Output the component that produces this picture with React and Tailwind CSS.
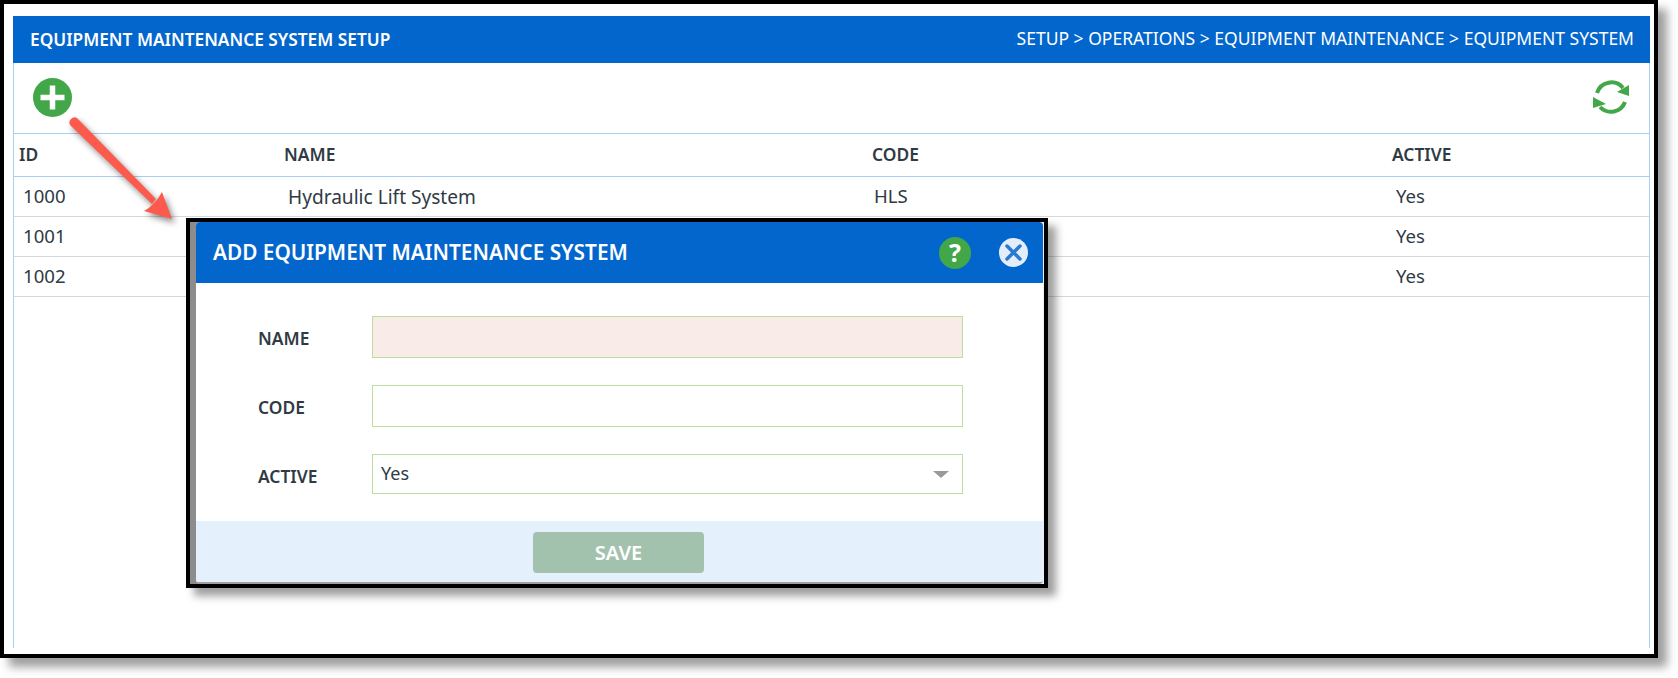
import React from 'react';

const rows = [
    { id: '1000', name: 'Hydraulic Lift System', code: 'HLS', active: 'Yes' },
    { id: '1001', name: '', code: '', active: 'Yes' },
    { id: '1002', name: '', code: '', active: 'Yes' },
];

const gridCols = 'grid grid-cols-[265px_588px_520px_1fr]';

const FormRow = ({ label, children, className = '', labelClass = 'pt-[2px]' }) => (
    <div className={`flex items-center ${className}`}>
        <label className={`w-[115px] pl-px text-[17.4px] font-semibold text-[#2f3a44] ${labelClass}`}>{label}</label>
        {children}
    </div>
);

const App = () => {
    return (
        <div className="w-[1678px] h-[678px] bg-white overflow-hidden relative font-['Noto_Sans',sans-serif] text-[#2f3a44]">
            <div className="w-[1658px] h-[658px] border-4 border-black shadow-[9px_9px_9px_rgba(0,0,0,0.38)] bg-white pt-3 pl-[9px] pr-1">
                <div className="h-[632px] w-[1637px] border-x border-[#a9cdf3]">
                    {/* Barra de titulo */}
                    <div className="h-[47px] -mx-px bg-[#0266cc] text-white flex items-center justify-between pl-[17px] pr-[16px]">
                        <h1 className="text-[17.3px] font-semibold">EQUIPMENT MAINTENANCE SYSTEM SETUP</h1>
                        <div className="text-[17.5px] -mt-[2px]">SETUP &gt; OPERATIONS &gt; EQUIPMENT MAINTENANCE &gt; EQUIPMENT SYSTEM</div>
                    </div>

                    {/* Acciones */}
                    <div className="h-[70px] flex items-start justify-between pl-[19px] pr-[15px] pt-[14px]">
                        <svg className="w-[39px] h-[39px] mt-px" viewBox="0 0 39 39">
                            <circle cx="19.5" cy="19.5" r="19.5" fill="#42a749" />
                            <path d="M19.5 7.5v24M7.5 19.5h24" stroke="#fff" strokeWidth="5.5" />
                        </svg>
                        <svg className="w-[44px] h-[40px]" viewBox="0 0 44 40" fill="none">
                            <path d="M7 16A15 15 0 0 1 33 11" stroke="#42a749" strokeWidth="4" />
                            <path d="M10 30A15 15 0 0 0 35 25" stroke="#42a749" strokeWidth="4" />
                            <path d="M27 15L39 8V19Z" fill="#42a749" />
                            <path d="M3 20L16 27L3 31Z" fill="#42a749" />
                        </svg>
                    </div>

                    {/* Tabla */}
                    <div className={`${gridCols} h-[44px] items-center border-y border-[#a9cdf3] text-[17.4px] font-semibold pl-[5px] pb-px`}>
                        <div>ID</div>
                        <div>NAME</div>
                        <div>CODE</div>
                        <div>ACTIVE</div>
                    </div>
                    {rows.map((row) => (
                        <div key={row.id} className={`${gridCols} h-[40px] items-center border-b border-[#d5d9dd] text-[18.6px] pl-[9px] pb-[2px]`}>
                            <div>{row.id}</div>
                            <div className="text-[19.1px] pt-[3px]">{row.name}</div>
                            <div className="-ml-[2px]">{row.code}</div>
                            <div>{row.active}</div>
                        </div>
                    ))}
                </div>
            </div>

            {/* Flecha */}
            <svg className="absolute left-[60px] top-[110px] w-[125px] h-[125px] drop-shadow-[3px_4px_3px_rgba(0,0,0,0.45)]" viewBox="0 0 125 125">
                <path d="M10.5 15.5A5 5 0 0 1 17.5 8.5L96 89L92 94Z" fill="#fd5a4e" />
                <path d="M102 82L112 109L84 101Q95 95 102 82Z" fill="#fd5a4e" />
            </svg>

            {/* Modal */}
            <div className="absolute left-[186px] top-[218px] w-[862px] h-[370px] border-4 border-black bg-gradient-to-r from-[#8c8c8c] to-[#f0f0f0] shadow-[8px_8px_8px_rgba(0,0,0,0.38)] pl-[6px] pr-px">
                <div className="h-full bg-white rounded border-b-2 border-[#a0a0a0] flex flex-col overflow-hidden">
                    <div className="h-[61px] shrink-0 bg-[#0266cc] text-white flex items-center pl-[17px] pr-[15px]">
                        <h2 className="text-[20.8px] font-semibold flex-1">ADD EQUIPMENT MAINTENANCE SYSTEM</h2>
                        <div className="w-[32px] h-[32px] rounded-full bg-[#42a749] flex items-center justify-center text-[25px] font-bold leading-none mr-[28px]">?</div>
                        <svg className="w-[29px] h-[29px]" viewBox="0 0 29 29">
                            <circle cx="14.5" cy="14.5" r="14.5" fill="#e3eefa" />
                            <path d="M8 8l13 13M21 8L8 21" stroke="#2b7ad1" strokeWidth="3.5" strokeLinecap="round" />
                        </svg>
                    </div>

                    <div className="flex-1 pt-[33px] pl-[61px]">
                        <FormRow label="NAME" className="mb-[27px]">
                            <input className="w-[591px] h-[42px] border border-[#bbdf9f] bg-[#f9ece8]" />
                        </FormRow>
                        <FormRow label="CODE" className="mb-[27px]">
                            <input className="w-[591px] h-[42px] border border-[#bbdf9f] bg-white" />
                        </FormRow>
                        <FormRow label="ACTIVE" labelClass="pt-[4px]">
                            <div className="w-[591px] h-[40px] border border-[#bbdf9f] bg-white flex items-center justify-between pl-[8px] pr-[13px] text-[18px]">
                                <span className="-mt-[2px]">Yes</span>
                                <span className="w-0 h-0 border-x-[8px] border-x-transparent border-t-[7px] border-t-[#999999]" />
                            </div>
                        </FormRow>
                    </div>

                    <div className="h-[61px] shrink-0 bg-[#e4f0fc] flex justify-center pt-[11px] pr-[2px]">
                        <button className="w-[171px] h-[41px] rounded bg-[#a3c2ad] text-white text-[20px] font-semibold pt-px">SAVE</button>
                    </div>
                </div>
            </div>
        </div>
    );
};

export default App;
